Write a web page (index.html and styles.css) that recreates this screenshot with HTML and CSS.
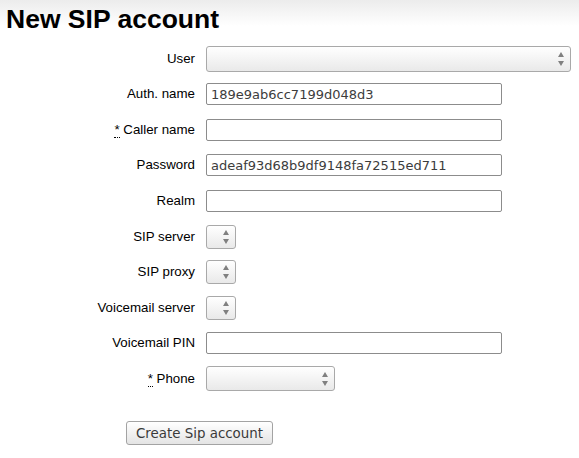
FILE: index.html
```html
<!DOCTYPE html>
<html>
<head>
<meta charset="utf-8">
<link rel="stylesheet" href="styles.css">
</head>
<body>
<h1 class="title">New SIP account</h1>
<form class="form">
  <label class="lbl">User</label>
  <div class="sel sel-user"><span class="arrows"><i class="up"></i><i class="down"></i></span></div>

  <label class="lbl">Auth. name</label>
  <input class="txt" type="text" value="189e9ab6cc7199d048d3">

  <label class="lbl"><abbr class="req">*</abbr> Caller name</label>
  <input class="txt" type="text" value="">

  <label class="lbl">Password</label>
  <input class="txt" type="text" value="adeaf93d68b9df9148fa72515ed711">

  <label class="lbl">Realm</label>
  <input class="txt" type="text" value="">

  <label class="lbl">SIP server</label>
  <div class="sel sel-small"><span class="arrows"><i class="up"></i><i class="down"></i></span></div>

  <label class="lbl">SIP proxy</label>
  <div class="sel sel-small"><span class="arrows"><i class="up"></i><i class="down"></i></span></div>

  <label class="lbl">Voicemail server</label>
  <div class="sel sel-small"><span class="arrows"><i class="up"></i><i class="down"></i></span></div>

  <label class="lbl">Voicemail PIN</label>
  <input class="txt" type="text" value="">

  <label class="lbl"><abbr class="req">*</abbr> Phone</label>
  <div class="sel sel-phone"><span class="arrows"><i class="up"></i><i class="down"></i></span></div>
</form>
<div class="actions">
  <button class="btn" type="button">Create Sip account</button>
</div>
</body>
</html>
```
FILE: styles.css
```css
html { background: #fff; }
body {
  margin: 0;
  padding: 0 8px 0 6px;
  font-family: "Liberation Sans", Arial, sans-serif;
  color: #000;
  background: linear-gradient(#ececec, #ffffff 26px) no-repeat;
  min-height: 458px;
  box-sizing: border-box;
}
.title {
  margin: 0;
  padding-top: 4px;
  font-size: 26.5px;
  line-height: 30px;
  font-weight: bold;
}
.form {
  margin-top: 7px;
  display: grid;
  grid-template-columns: 189px auto;
  grid-auto-rows: 35.55px;
  column-gap: 11px;
  align-items: center;
  justify-items: start;
}
.lbl {
  justify-self: end;
  font-size: 13.3px;
  line-height: 16px;
  white-space: nowrap;
}
.req {
  text-decoration: none;
  border-bottom: 1px dotted #000;
}
.txt {
  box-sizing: border-box;
  width: 296px;
  height: 22px;
  margin: 0;
  padding: 0 4px;
  border: 1px solid #8c8c8c;
  border-radius: 2px;
  background: #fff;
  font-family: "DejaVu Sans", sans-serif;
  font-size: 13px;
  color: #3c3c3c;
  outline: none;
}
.sel {
  position: relative;
  box-sizing: border-box;
  height: 24px;
  border: 1px solid #a9a9a9;
  border-radius: 3px;
  background: linear-gradient(#ffffff, #e9e9e9);
}
.sel-user { width: 365px; height: 26px; }
.sel-small { width: 30px; }
.sel-phone { width: 129px; height: 25px; }
.arrows {
  position: absolute;
  right: 6px;
  top: 50%;
  transform: translateY(-50%);
  display: flex;
  flex-direction: column;
  gap: 4px;
}
.arrows i {
  display: block;
  width: 0;
  height: 0;
  border-left: 3px solid transparent;
  border-right: 3px solid transparent;
}
.arrows .up { border-bottom: 5px solid #808080; }
.arrows .down { border-top: 5px solid #808080; }
.actions {
  margin-top: 25px;
  padding-left: 120px;
}
.btn {
  box-sizing: border-box;
  width: 147px;
  height: 24px;
  margin: 0;
  padding: 0;
  border: 1px solid #a3a3a3;
  border-radius: 3px;
  background: linear-gradient(#ffffff, #e4e4e4);
  font-family: "DejaVu Sans", sans-serif;
  font-size: 13.4px;
  color: #3a3a3a;
}
```
